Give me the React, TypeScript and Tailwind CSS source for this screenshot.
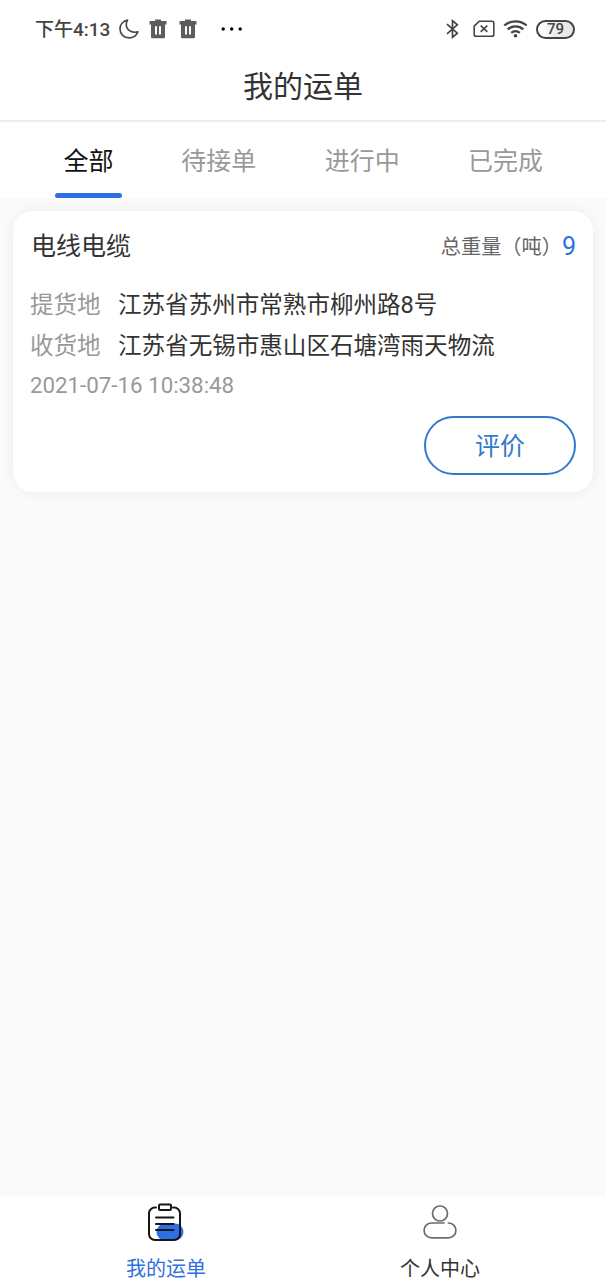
import clsx from "clsx";

const tabs = ["全部", "待接单", "进行中", "已完成"];

const order = {
  goods: "电线电缆",
  weight: 9,
  pickup: "江苏省苏州市常熟市柳州路8号",
  delivery: "江苏省无锡市惠山区石塘湾雨天物流",
  createdAt: "2021-07-16 10:38:48",
};

const TrashIcon = () => (
  <svg width="18" height="20" viewBox="0 0 18 20" fill="#5c5c5c">
    <path d="M6 0.5h6v1.500h5.500v3.500H0.500V2H6z" />
    <path
      fillRule="evenodd"
      d="M2 5h14v13a1.200 1.200 0 0 1-1.200 1.200H3.200A1.200 1.200 0 0 1 2 18zM6 7.200v8.300h2V7.200zM10 7.200v8.300h2V7.200z"
    />
  </svg>
);

const StatusBar = () => (
  <div className="h-[58px] flex items-center justify-between pl-[35px] pr-[31px]">
    <div className="flex items-center">
      <span className="w-[75px] pt-[2px] text-[19px] leading-6 font-medium whitespace-nowrap text-[#444]">
        下午4:13
      </span>
      <svg
        className="ml-[9px]"
        width="20"
        height="20"
        viewBox="0 0 20 20"
        fill="none"
        stroke="#4a4a4a"
        strokeWidth="1.700"
        strokeLinejoin="round"
      >
        <path d="M8.500 1.100C3.800 2 1 5.700 1 9.900 1 15 5 18.900 10 18.900c4.200 0 7.500-2.500 8.900-6.200-5.200 1.700-11.600-1.200-11.600-6.900 0-1.700.4-3.300 1.200-4.700z" />
      </svg>
      <div className="flex gap-3 ml-[10px]">
        <TrashIcon />
        <TrashIcon />
      </div>
      <svg className="ml-[24px]" width="22" height="4" viewBox="0 0 22 4">
        <circle cx="2.200" cy="2" r="1.700" />
        <circle cx="10.700" cy="2" r="1.700" />
        <circle cx="19.200" cy="2" r="1.700" />
      </svg>
    </div>

    <div className="flex items-center">
      <svg
        width="14"
        height="20"
        viewBox="0 0 14 20"
        fill="none"
        stroke="#444"
        strokeWidth="1.700"
      >
        <path d="M2 5.200l10.300 9L7.500 18.300V1.700l4.800 4.100L2 14.800" />
      </svg>
      <svg
        className="ml-[14px]"
        width="22"
        height="18"
        viewBox="0 0 22 18"
        fill="none"
        stroke="#444"
        strokeWidth="1.600"
      >
        <path d="M6.200 1.200H19a1.800 1.800 0 0 1 1.800 1.800v11.500a1.800 1.800 0 0 1-1.800 1.800H3a1.800 1.800 0 0 1-1.800-1.800V6.200z" />
        <path d="M7.700 5.700l6.600 6.200M14.300 5.700l-6.600 6.200" />
      </svg>
      <svg
        className="ml-[8px]"
        width="25"
        height="18"
        viewBox="0 0 25 18"
        fill="none"
        stroke="#444"
        strokeWidth="2.200"
      >
        <path d="M1.200 5.500c6.500-5.500 16-5.500 22.500 0M4.700 9.300c4.500-3.900 11.100-3.900 15.600 0M8.200 12.900c2.600-2.200 6-2.200 8.600 0" />
        <circle cx="12.500" cy="15.800" r="1.800" fill="#444" stroke="none" />
      </svg>
      <div className="ml-[8px] w-[39px] h-[19px] flex items-center justify-center rounded-full border-2 border-[#444] bg-linear-to-r from-white via-[#ececec] to-[#e6e6e6] text-[15px] leading-none font-medium text-[#444]">
        79
      </div>
    </div>
  </div>
);

const OrdersIcon = () => (
  <svg width="38" height="40" viewBox="0 0 38 40" fill="none">
    <rect x="9.500" y="20.500" width="27" height="17" rx="8.500" fill="#2f6fe4" />
    <g stroke="#161616" strokeWidth="2">
      <path
        strokeLinecap="round"
        d="M9 4.500H8a6 6 0 0 0-6 6v20.500a6 6 0 0 0 6 6h19a6 6 0 0 0 6-6V10.500a6 6 0 0 0-6-6h-1"
      />
      <rect x="12" y="1.500" width="12" height="5.500" rx="1" />
      <path strokeLinecap="round" d="M9 14.500h17.500M9 21h17.500M9 27h17.500" />
    </g>
  </svg>
);

const ProfileIcon = () => (
  <svg
    width="36"
    height="36"
    viewBox="0 0 36 36"
    fill="none"
    stroke="#6c6c6c"
    strokeWidth="1.700"
  >
    <circle cx="18" cy="9.500" r="7.500" />
    <path d="M22.700 19H9.500a7.400 7.400 0 0 0 0 14.800h17a7.400 7.400 0 0 0 0-14.800h-.7" />
  </svg>
);

const AddressRow = ({ label, value }: { label: string; value: string }) => (
  <div className="flex h-[41px] items-center text-[23.550px] whitespace-nowrap">
    <span className="w-[88px] text-[#999]">{label}</span>
    <span className="text-[#333]">{value}</span>
  </div>
);

const OrderCard = () => (
  <div className="mx-[13px] mt-[13px] h-[281px] rounded-[20px] bg-white px-[17px] pt-[16px] shadow-[0_0_14px_rgba(0,0,0,0.06)]">
    <div className="flex h-10 items-center justify-between">
      <h2 className="pl-px text-[25px] leading-10 text-[#333]">
        {order.goods}
      </h2>
      <div className="flex items-center leading-10">
        <span className="text-[20.200px] text-[#666]">总重量（吨）</span>
        <span className="text-[25px] text-[#3070dc]">{order.weight}</span>
      </div>
    </div>
    <div className="mt-[18px]">
      <AddressRow label="提货地" value={order.pickup} />
      <AddressRow label="收货地" value={order.delivery} />
      <p className="h-9 text-[22.300px] leading-9 text-[#999]">
        {order.createdAt}
      </p>
    </div>
    <div className="flex justify-end mt-[13px]">
      <button className="w-[152px] h-[59px] pt-[3px] rounded-full border-2 border-[#3478d0] text-[25px] text-[#3478d0]">
        评价
      </button>
    </div>
  </div>
);

export default function App() {
  return (
    <div className="flex h-[1280px] w-[606px] flex-col overflow-hidden bg-[#fafafa] font-['Roboto','Noto_Sans_CJK_SC',sans-serif]">
      <header className="h-[122px] bg-white border-b-2 border-[#ececec]">
        <StatusBar />
        <h1 className="text-center text-[30px] leading-[57px] text-[#333]">
          我的运单
        </h1>
      </header>

      <nav className="flex h-[76px] justify-between bg-white pl-[55px] pr-[63px]">
        {tabs.map((tab, i) => (
          <div
            key={tab}
            className={clsx(
              "flex flex-col items-center justify-between text-[25px] leading-[80px]",
              i === 0 ? "w-[67px] -mr-[9px] text-[#111]" : "text-[#999]"
            )}
          >
            <span className="h-[71px]">{tab}</span>
            {i === 0 && (
              <div className="h-[5px] w-full rounded-full bg-[#2f6fe4]" />
            )}
          </div>
        ))}
      </nav>

      <main className="flex-1">
        <OrderCard />
      </main>

      <footer className="flex h-[84px] justify-between bg-white px-[126px] text-[20px] leading-[26px]">
        <div className="flex flex-col items-center text-[#3070dc]">
          <div className="h-[60px] shrink-0 pt-[7px]">
            <OrdersIcon />
          </div>
          我的运单
        </div>
        <div className="flex flex-col items-center text-[#333]">
          <div className="h-[60px] shrink-0 pt-[8px]">
            <ProfileIcon />
          </div>
          个人中心
        </div>
      </footer>
    </div>
  );
}
